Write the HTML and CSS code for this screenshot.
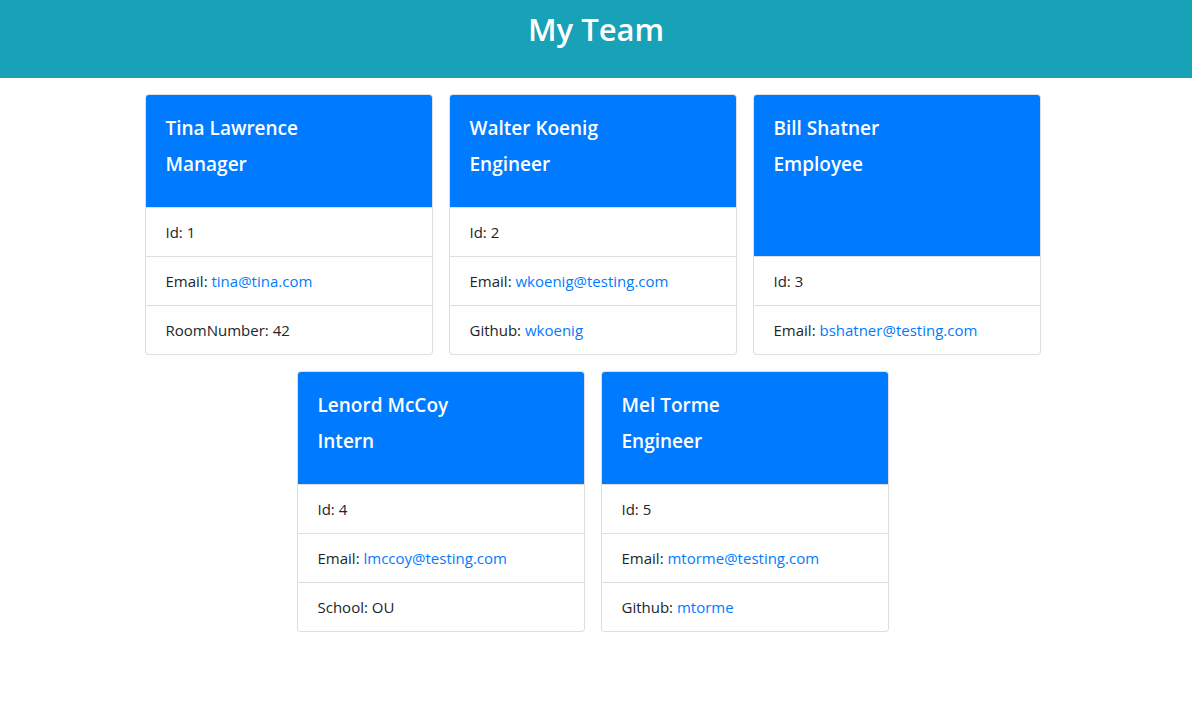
FILE: index.html
```html
<!DOCTYPE html>
<html lang="en">
<head>
<meta charset="utf-8">
<title>My Team</title>
<link rel="stylesheet" href="styles.css">
</head>
<body>
<header class="banner"><h1 class="banner-title">My Team</h1></header>
<main class="team">
  <div class="card">
    <div class="card-header"><h5 class="card-title">Tina Lawrence</h5><h5 class="card-title">Manager</h5></div>
    <ul class="list">
      <li class="item">Id: 1</li>
      <li class="item">Email: <a href="#">tina@tina.com</a></li>
      <li class="item">RoomNumber: 42</li>
    </ul>
  </div>
  <div class="card">
    <div class="card-header"><h5 class="card-title">Walter Koenig</h5><h5 class="card-title">Engineer</h5></div>
    <ul class="list">
      <li class="item">Id: 2</li>
      <li class="item">Email: <a href="#">wkoenig@testing.com</a></li>
      <li class="item">Github: <a href="#">wkoenig</a></li>
    </ul>
  </div>
  <div class="card">
    <div class="card-header"><h5 class="card-title">Bill Shatner</h5><h5 class="card-title">Employee</h5></div>
    <ul class="list">
      <li class="item">Id: 3</li>
      <li class="item">Email: <a href="#">bshatner@testing.com</a></li>
    </ul>
  </div>
  <div class="card">
    <div class="card-header"><h5 class="card-title">Lenord McCoy</h5><h5 class="card-title">Intern</h5></div>
    <ul class="list">
      <li class="item">Id: 4</li>
      <li class="item">Email: <a href="#">lmccoy@testing.com</a></li>
      <li class="item">School: OU</li>
    </ul>
  </div>
  <div class="card">
    <div class="card-header"><h5 class="card-title">Mel Torme</h5><h5 class="card-title">Engineer</h5></div>
    <ul class="list">
      <li class="item">Id: 5</li>
      <li class="item">Email: <a href="#">mtorme@testing.com</a></li>
      <li class="item">Github: <a href="#">mtorme</a></li>
    </ul>
  </div>
</main>
</body>
</html>
```

FILE: styles.css
```css
* { box-sizing: border-box; }
html, body {
  margin: 0;
  padding: 0;
  background: #fff;
  font-family: "Open Sans", "Noto Sans", "Liberation Sans", sans-serif;
  color: #212529;
  font-size: 16px;
}
.banner {
  background: #17a2b8;
  height: 78px;
  display: flex;
  justify-content: center;
  padding-top: 7px;
}
.banner-title {
  margin: 0;
  color: #fff;
  font-size: 31px;
  font-weight: 600;
  line-height: 44px;
}
.team {
  width: 903px;
  margin: 16px auto 0;
  padding-right: 7px;
  display: flex;
  flex-wrap: wrap;
  justify-content: center;
  gap: 16px 16px;
}
.card {
  width: 288px;
  border: 1px solid rgba(0,0,0,.125);
  border-radius: 4px;
  display: flex;
  flex-direction: column;
  overflow: hidden;
  background: #fff;
}
.card-header {
  flex: 1 1 auto;
  background: #007bff;
  color: #fff;
  padding: 21px 20px 8px;
}
.card-title {
  margin: 0 0 12px;
  font-size: 19px;
  font-weight: 600;
  line-height: 24px;
}
.card-title + .card-title {
  margin-bottom: 23px;
}
.list {
  list-style: none;
  margin: 0;
  padding: 0;
}
.item {
  border-top: 1px solid rgba(0,0,0,.125);
  padding: 12px 20px;
  line-height: 24px;
  font-size: 15px;
}
.item a {
  color: #007bff;
  text-decoration: none;
}
```
